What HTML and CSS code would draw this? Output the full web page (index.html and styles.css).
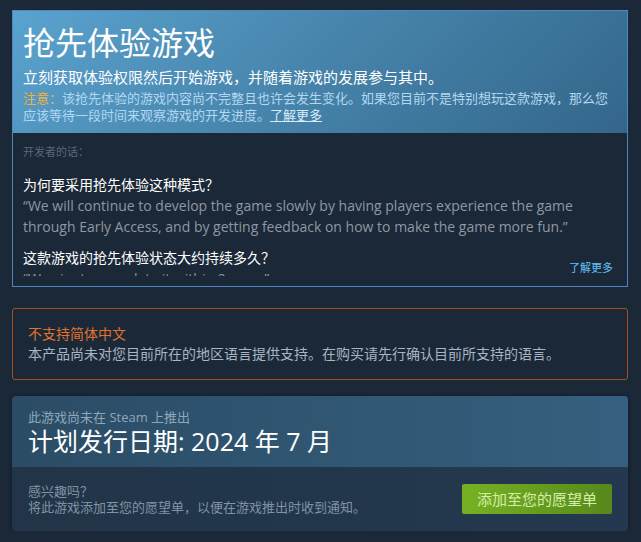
FILE: index.html
```html
<!DOCTYPE html>
<html lang="zh-CN">
<head>
<meta charset="utf-8">
<title>抢先体验游戏</title>
<link rel="stylesheet" href="styles.css">
</head>
<body>
<div class="page">
  <section class="ea">
    <div class="ea-head">
      <h1 class="ea-title">抢先体验游戏</h1>
      <p class="ea-sub">立刻获取体验权限然后开始游戏，并随着游戏的发展参与其中。</p>
      <p class="ea-note"><span class="ea-warn">注意：</span>该抢先体验的游戏内容尚不完整且也许会发生变化。如果您目前不是特别想玩这款游戏，那么您应该等待一段时间来观察游戏的开发进度。<a class="ea-more" href="#">了解更多</a></p>
    </div>
    <div class="ea-body">
      <div class="ea-clip">
        <div class="ea-label">开发者的话：</div>
        <h2 class="ea-q">为何要采用抢先体验这种模式？</h2>
        <p class="ea-a">“We will continue to develop the game slowly by having players experience the game through Early Access, and by getting feedback on how to make the game more fun.”</p>
        <h2 class="ea-q">这款游戏的抢先体验状态大约持续多久？</h2>
        <p class="ea-a">“We aim to complete it within 2 years”</p>
      </div>
      <a class="ea-readmore" href="#">了解更多</a>
    </div>
  </section>

  <section class="lang">
    <div class="lang-title">不支持简体中文</div>
    <div class="lang-desc">本产品尚未对您目前所在的地区语言提供支持。在购买请先行确认目前所支持的语言。</div>
  </section>

  <section class="soon">
    <div class="soon-top">
      <div class="soon-pre">此游戏尚未在 Steam 上推出</div>
      <div class="soon-date">计划发行日期: 2024 年 7 月</div>
    </div>
    <div class="soon-bottom">
      <div class="soon-text">
        <div>感兴趣吗？</div>
        <div>将此游戏添加至您的愿望单，以便在游戏推出时收到通知。</div>
      </div>
      <a class="btn-wish" href="#">添加至您的愿望单</a>
    </div>
  </section>
</div>
</body>
</html>
```
FILE: styles.css
```css
* { box-sizing: border-box; }
html, body { margin: 0; padding: 0; }
body {
  background: #1b2838;
  font-family: "Open Sans", "Liberation Sans", Arial, "Noto Sans CJK SC", sans-serif;
  color: #c6d4df;
}
.page {
  padding: 10px 13px 0 12px;
}
a { text-decoration: none; }

/* early access block */
.ea {
  border: 1px solid #4c88bd;
}
.ea-head {
  padding: 10px 10px 9px 10px;
  background: linear-gradient(135deg, #5aa3cf 0%, #4886ad 45%, #34668a 100%);
}
.ea-title {
  margin: 0;
  font-size: 32px;
  line-height: 44px;
  font-weight: normal;
  color: #ffffff;
}
.ea-sub {
  margin: 2px 0 0;
  font-size: 15px;
  line-height: 20px;
  color: #ffffff;
}
.ea-note {
  margin: 3px 0 0;
  font-size: 13px;
  line-height: 17px;
  color: #b2d8f1;
}
.ea-warn { color: #f5b03d; }
.ea-more {
  color: #d8ecf8;
  text-decoration: underline;
}
.ea-body {
  position: relative;
  padding: 10px 10px 10px 10px;
  background: #1b2838;
}
.ea-clip {
  height: 133px;
  overflow: hidden;
}
.ea-label {
  font-size: 11px;
  line-height: 18px;
  color: #56697a;
}
.ea-q {
  margin: 14px 0 0;
  font-size: 14px;
  line-height: 20px;
  font-weight: normal;
  color: #ffffff;
}
.ea-a {
  margin: 0;
  font-size: 14px;
  line-height: 21px;
  color: #8f98a0;
}
.ea-q ~ .ea-q { margin-top: 11px; }
.ea-readmore {
  position: absolute;
  right: 14px;
  bottom: 11px;
  font-size: 11px;
  line-height: 14px;
  color: #66c0f4;
}

/* language warning */
.lang {
  margin-top: 21px;
  border: 1px solid #a3501f;
  border-radius: 3px;
  padding: 15px 15px 15px 15px;
}
.lang-title {
  font-size: 14px;
  line-height: 20px;
  color: #e3732a;
}
.lang-desc {
  font-size: 14px;
  line-height: 20px;
  color: #a9b5c0;
}

/* coming soon */
.soon {
  margin-top: 16px;
  border-radius: 4px;
  overflow: hidden;
  box-shadow: 0 0 4px rgba(0, 0, 0, 0.35);
}
.soon-top {
  padding: 12px 16px 10px;
  background: linear-gradient(to right, #2b4c65 0%, #35607f 100%);
}
.soon-pre {
  font-size: 13px;
  line-height: 18px;
  color: #8fa7ba;
}
.soon-date {
  font-size: 25px;
  line-height: 31px;
  color: #ffffff;
}
.soon-bottom {
  height: 64px;
  padding: 0 16px;
  display: flex;
  align-items: center;
  justify-content: space-between;
  background: linear-gradient(to right, #213448 0%, #24394f 100%);
}
.soon-text {
  font-size: 13px;
  line-height: 16px;
  color: #8093a5;
}
.btn-wish {
  display: block;
  width: 150px;
  height: 30px;
  line-height: 30px;
  text-align: center;
  font-size: 15px;
  color: #d2efa9;
  border-radius: 2px;
  background: linear-gradient(to right, #75b022 5%, #588a1b 95%);
}
```
